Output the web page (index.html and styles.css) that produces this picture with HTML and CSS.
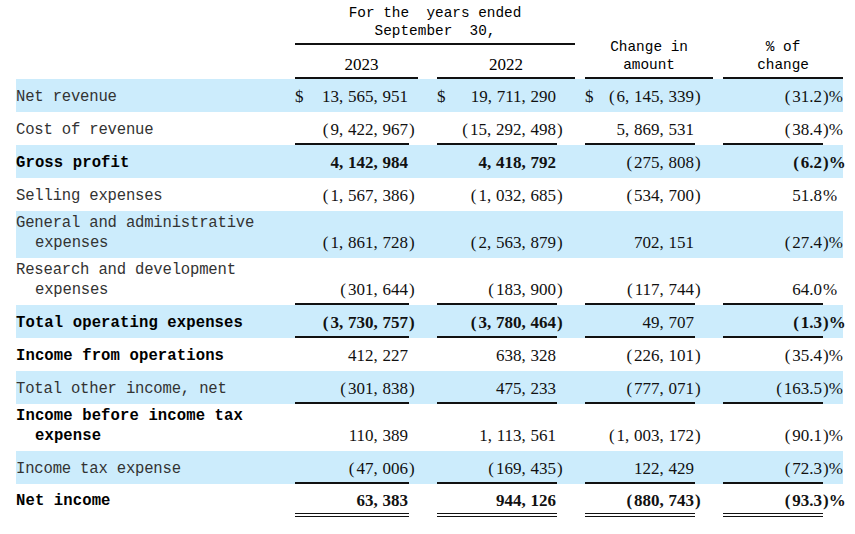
FILE: index.html
```html
<!DOCTYPE html>
<html>
<head>
<meta charset="utf-8">
<link rel="stylesheet" href="styles.css">
</head>
<body>
<table class="fin">
  <colgroup>
    <col class="c-label"><col class="c-n1"><col class="c-s1"><col class="c-g1">
    <col class="c-n2"><col class="c-s2"><col class="c-g2">
    <col class="c-n3"><col class="c-s3"><col class="c-g3">
    <col class="c-n4"><col class="c-s4">
  </colgroup>
  <thead>
    <tr class="h1">
      <th rowspan="2"></th>
      <th colspan="5" class="hd ul">For the  years ended
September  30,</th>
      <th rowspan="2"></th>
      <th colspan="2" rowspan="2" class="hd ul">Change in
amount</th>
      <th rowspan="2"></th>
      <th colspan="2" rowspan="2" class="hd ul">% of
change</th>
    </tr>
    <tr class="h2">
      <th colspan="2" class="yr ul y1">2023</th>
      <th></th>
      <th colspan="2" class="yr ul">2022</th>
    </tr>
  </thead>
  <tbody>
    <tr class="blue">
      <td class="lbl">Net revenue</td>
      <td class="n"><span class="cur">$</span>13, 565, 951</td><td class="s"></td><td></td>
      <td class="n"><span class="cur">$</span>19, 711, 290</td><td class="s"></td><td></td>
      <td class="n"><span class="cur">$</span><span class="lp">(</span>6, 145, 339</td><td class="s">)</td><td></td>
      <td class="n"><span class="lp">(</span>31.2</td><td class="s">)%</td>
    </tr>
    <tr class="line">
      <td class="lbl">Cost of revenue</td>
      <td class="n"><span class="lp">(</span>9, 422, 967</td><td class="s">)</td><td></td>
      <td class="n"><span class="lp">(</span>15, 292, 498</td><td class="s">)</td><td></td>
      <td class="n">5, 869, 531</td><td class="s"></td><td></td>
      <td class="n"><span class="lp">(</span>38.4</td><td class="s">)%</td>
    </tr>
    <tr class="blue">
      <td class="lbl strong">Gross profit</td>
      <td class="n strong">4, 142, 984</td><td class="s"></td><td></td>
      <td class="n strong">4, 418, 792</td><td class="s"></td><td></td>
      <td class="n"><span class="lp">(</span>275, 808</td><td class="s">)</td><td></td>
      <td class="n strong"><span class="lp">(</span>6.2</td><td class="s strong">)%</td>
    </tr>
    <tr>
      <td class="lbl">Selling expenses</td>
      <td class="n"><span class="lp">(</span>1, 567, 386</td><td class="s">)</td><td></td>
      <td class="n"><span class="lp">(</span>1, 032, 685</td><td class="s">)</td><td></td>
      <td class="n"><span class="lp">(</span>534, 700</td><td class="s">)</td><td></td>
      <td class="n">51.8</td><td class="s">%</td>
    </tr>
    <tr class="blue">
      <td class="lbl">General and administrative expenses</td>
      <td class="n"><span class="lp">(</span>1, 861, 728</td><td class="s">)</td><td></td>
      <td class="n"><span class="lp">(</span>2, 563, 879</td><td class="s">)</td><td></td>
      <td class="n">702, 151</td><td class="s"></td><td></td>
      <td class="n"><span class="lp">(</span>27.4</td><td class="s">)%</td>
    </tr>
    <tr class="line">
      <td class="lbl">Research and development expenses</td>
      <td class="n"><span class="lp">(</span>301, 644</td><td class="s">)</td><td></td>
      <td class="n"><span class="lp">(</span>183, 900</td><td class="s">)</td><td></td>
      <td class="n"><span class="lp">(</span>117, 744</td><td class="s">)</td><td></td>
      <td class="n">64.0</td><td class="s">%</td>
    </tr>
    <tr class="blue line">
      <td class="lbl strong">Total operating expenses</td>
      <td class="n strong"><span class="lp">(</span>3, 730, 757</td><td class="s strong">)</td><td></td>
      <td class="n strong"><span class="lp">(</span>3, 780, 464</td><td class="s strong">)</td><td></td>
      <td class="n">49, 707</td><td class="s"></td><td></td>
      <td class="n strong"><span class="lp">(</span>1.3</td><td class="s strong">)%</td>
    </tr>
    <tr>
      <td class="lbl strong">Income from operations</td>
      <td class="n">412, 227</td><td class="s"></td><td></td>
      <td class="n">638, 328</td><td class="s"></td><td></td>
      <td class="n"><span class="lp">(</span>226, 101</td><td class="s">)</td><td></td>
      <td class="n"><span class="lp">(</span>35.4</td><td class="s">)%</td>
    </tr>
    <tr class="blue line">
      <td class="lbl">Total other income, net</td>
      <td class="n"><span class="lp">(</span>301, 838</td><td class="s">)</td><td></td>
      <td class="n">475, 233</td><td class="s"></td><td></td>
      <td class="n"><span class="lp">(</span>777, 071</td><td class="s">)</td><td></td>
      <td class="n"><span class="lp">(</span>163.5</td><td class="s">)%</td>
    </tr>
    <tr>
      <td class="lbl strong">Income before income tax expense</td>
      <td class="n">110, 389</td><td class="s"></td><td></td>
      <td class="n">1, 113, 561</td><td class="s"></td><td></td>
      <td class="n"><span class="lp">(</span>1, 003, 172</td><td class="s">)</td><td></td>
      <td class="n"><span class="lp">(</span>90.1</td><td class="s">)%</td>
    </tr>
    <tr class="blue line">
      <td class="lbl">Income tax expense</td>
      <td class="n"><span class="lp">(</span>47, 006</td><td class="s">)</td><td></td>
      <td class="n"><span class="lp">(</span>169, 435</td><td class="s">)</td><td></td>
      <td class="n">122, 429</td><td class="s"></td><td></td>
      <td class="n"><span class="lp">(</span>72.3</td><td class="s">)%</td>
    </tr>
    <tr class="dbl">
      <td class="lbl strong">Net income</td>
      <td class="n strong">63, 383</td><td class="s"></td><td></td>
      <td class="n strong">944, 126</td><td class="s"></td><td></td>
      <td class="n strong"><span class="lp">(</span>880, 743</td><td class="s strong">)</td><td></td>
      <td class="n strong"><span class="lp">(</span>93.3</td><td class="s strong">)%</td>
    </tr>
  </tbody>
</table>
</body>
</html>
```
FILE: styles.css
```css
html, body {
  margin: 0;
  padding: 0;
  background: #ffffff;
}

.fin {
  margin-left: 16px;
  width: 827px;
  table-layout: fixed;
  border-collapse: separate;
  border-spacing: 0;
  color: #000;
}

.c-label { width: 279px; }
.c-n1 { width: 114px; }
.c-s1 { width: 9px; }
.c-g1 { width: 19px; }
.c-n2 { width: 120px; }
.c-s2 { width: 18px; }
.c-g2 { width: 10px; }
.c-n3 { width: 110px; }
.c-s3 { width: 18px; }
.c-g3 { width: 10px; }
.c-n4 { width: 100px; }
.c-s4 { width: 20px; }

.h1 { height: 45px; }
.h2 { height: 34px; }

.fin th {
  padding: 0;
  font-weight: normal;
  vertical-align: bottom;
}

.hd {
  font-family: "Liberation Mono", "DejaVu Sans Mono", monospace;
  font-size: 14.4px;
  line-height: 18px;
  white-space: pre;
  text-align: center;
  color: #000;
  padding-bottom: 3px !important;
}

.yr {
  font-family: "Liberation Serif", serif;
  font-size: 17px;
  line-height: 18px;
  text-align: center;
  padding-bottom: 3px !important;
}

.y1 {
  padding-left: 10px !important;
}

.ul {
  border-bottom: 2px solid #111;
}

.fin tbody tr {
  height: 33px;
}

.fin td {
  padding: 2px 0 5px 0;
  line-height: 20px;
  vertical-align: bottom;
}

.blue {
  background: #ccecfc;
}

.lbl {
  font-family: "Liberation Mono", "DejaVu Sans Mono", monospace;
  font-size: 15.6px;
  letter-spacing: -0.2px;
  color: #333;
  padding-left: 19px !important;
  text-indent: -19px;
}

.lbl.strong {
  font-weight: bold;
  color: #000;
  letter-spacing: 0.1px;
}

.n, .s {
  font-family: "Liberation Serif", serif;
  font-size: 17px;
  color: #111;
}

.n {
  text-align: right;
  padding-right: 1px !important;
  word-spacing: 0.5px;
}

.s {
  text-align: left;
  white-space: nowrap;
}

.strong {
  font-weight: bold;
}

.cur {
  float: left;
}

.lp {
  margin-right: 2px;
}

.fin .line td.n {
  padding-bottom: 3px;
  border-bottom: 2px solid #111;
}

.fin .dbl td {
  padding-bottom: 6px;
}

.fin .dbl td.n {
  padding-bottom: 2px;
  border-bottom: 4px double #111;
}
```
